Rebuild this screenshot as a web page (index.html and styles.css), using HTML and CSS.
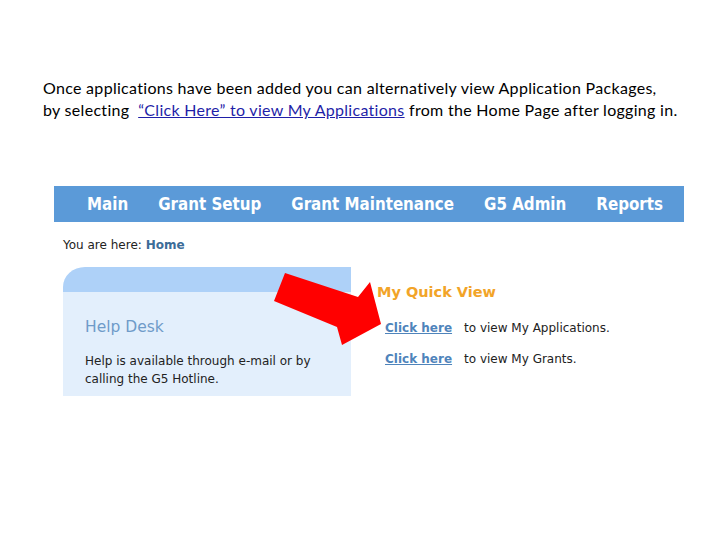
FILE: index.html
```html
<!DOCTYPE html>
<html lang="en">
<head>
    <meta charset="UTF-8">
    <title>Application Packages</title>
    <link rel="stylesheet" href="styles.css">
</head>
<body>
    <!-- Intro text -->
    <p class="intro">
        Once applications have been added you can alternatively view Application Packages,<br>
        by selecting &nbsp;<a href="#">“Click Here” to view My Applications</a> from the Home Page after logging in.
    </p>

    <!-- Screenshot of the G5 home page -->
    <div class="shot">
        <nav class="topnav">
            <a href="#">Main</a>
            <a href="#">Grant Setup</a>
            <a href="#">Grant Maintenance</a>
            <a href="#">G5 Admin</a>
            <a href="#">Reports</a>
        </nav>

        <div class="crumb">You are here: <strong>Home</strong></div>

        <div class="content">
            <div class="help-panel">
                <div class="help-top"></div>
                <div class="help-body">
                    <h3>Help Desk</h3>
                    <p>Help is available through e-mail or by calling the G5 Hotline.</p>
                </div>
            </div>

            <div class="quick-view">
                <h4>My Quick View</h4>
                <div class="qv-row"><a href="#">Click here</a><span>to view My Applications.</span></div>
                <div class="qv-row"><a href="#">Click here</a><span>to view My Grants.</span></div>
            </div>
        </div>
    </div>

    <!-- Red arrow pointing at the link -->
    <svg class="arrow" width="720" height="540" viewBox="0 0 720 540">
        <polygon points="285,273 358,297 370,282 381,324 342,345 337,327 274,301" fill="#ff0000"/>
    </svg>
</body>
</html>
```

FILE: styles.css
```css
* {
    margin: 0;
    padding: 0;
    box-sizing: border-box;
}

body {
    width: 720px;
    height: 540px;
    background: #fff;
    position: relative;
    overflow: hidden;
}

/* Intro text */
.intro {
    margin: 77px 0 0 43px;
    font-family: 'Lato', sans-serif;
    font-size: 16px;
    letter-spacing: 0.3px;
    line-height: 22px;
    color: #000;
}

.intro a {
    color: #1f1fa8;
    text-decoration: underline;
}

/* Screenshot */
.shot {
    width: 630px;
    margin: 65px 0 0 54px;
    font-family: 'DejaVu Sans', Verdana, sans-serif;
}

.topnav {
    height: 36px;
    background: #5b9ad8;
    display: flex;
    align-items: center;
    padding-left: 33px;
    gap: 30px;
}

.topnav a {
    color: #fff;
    text-decoration: none;
    font-family: 'DejaVu Sans Condensed', 'DejaVu Sans', sans-serif;
    font-stretch: condensed;
    font-weight: bold;
    font-size: 16.8px;
}

.crumb {
    margin: 15px 0 0 9px;
    font-size: 12px;
    line-height: 16px;
    color: #222;
}

.crumb strong {
    color: #3c6c98;
}

.content {
    display: flex;
    margin-top: 14px;
}

.help-panel {
    width: 288px;
    margin-left: 9px;
}

.help-top {
    height: 25px;
    background: #aed1f8;
    border-top-left-radius: 22px 20px;
}

.help-body {
    height: 104px;
    background: #e3effc;
    padding: 25px 22px 0;
}

.help-body h3 {
    font-weight: normal;
    font-size: 15.5px;
    color: #6f9bc9;
    line-height: 20px;
}

.help-body p {
    margin-top: 15px;
    font-size: 12px;
    line-height: 18px;
    color: #222;
}

.quick-view {
    margin-left: 26px;
    padding-top: 16px;
}

.quick-view h4 {
    font-size: 14.5px;
    color: #f2a428;
    line-height: 18px;
    margin-bottom: 19px;
}

.qv-row {
    font-size: 12px;
    line-height: 16px;
    margin: 0 0 15px 8px;
    color: #222;
    display: flex;
    gap: 12px;
}

.qv-row a {
    color: #4f84bb;
    font-weight: bold;
    text-decoration: underline;
}

.arrow {
    position: absolute;
    top: 0;
    left: 0;
    pointer-events: none;
}
```
